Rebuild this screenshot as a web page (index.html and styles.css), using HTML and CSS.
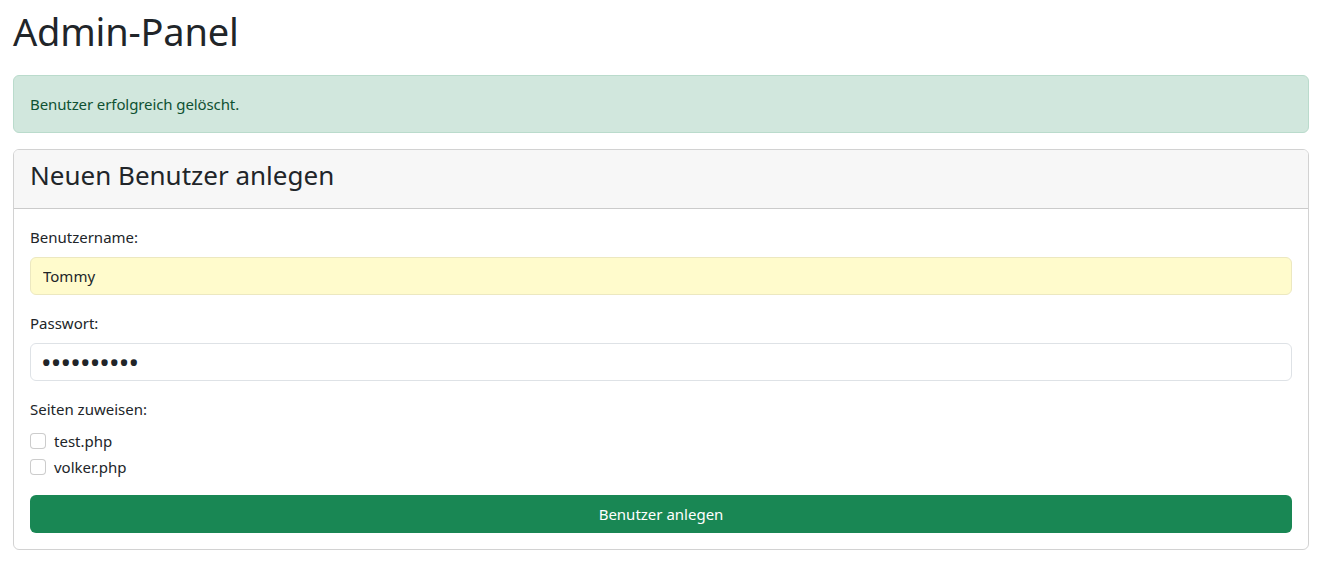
FILE: index.html
```html
<!DOCTYPE html>
<html lang="de">
<head>
<meta charset="utf-8">
<title>Admin-Panel</title>
<link rel="stylesheet" href="styles.css">
</head>
<body>
<div class="container">
  <h1 class="title">Admin-Panel</h1>
  <div class="alert">Benutzer erfolgreich gelöscht.</div>
  <div class="card">
    <div class="card-header"><h3 class="card-title">Neuen Benutzer anlegen</h3></div>
    <div class="card-body">
      <div class="field">
        <label class="label" for="u">Benutzername:</label>
        <input class="input autofill" id="u" type="text" value="Tommy">
      </div>
      <div class="field">
        <label class="label" for="p">Passwort:</label>
        <input class="input pw" id="p" type="password" value="geheim1234">
      </div>
      <div class="field">
        <div class="label">Seiten zuweisen:</div>
        <div class="check"><span class="box"></span><span>test.php</span></div>
        <div class="check"><span class="box"></span><span>volker.php</span></div>
      </div>
      <button class="btn" type="button">Benutzer anlegen</button>
    </div>
  </div>
</div>
</body>
</html>
```
FILE: styles.css
```css
* { box-sizing: border-box; }
html, body { margin: 0; padding: 0; background: #fff; }
body {
  font-family: "Noto Sans", "Open Sans", sans-serif;
  font-size: 15px;
  line-height: 24px;
  color: #212529;
}
.container { padding: 0 10px 0 13px; }
.title {
  font-size: 38px;
  font-weight: 400;
  line-height: 50px;
  margin: 6px 0 19px;
  letter-spacing: -0.2px;
}
.alert {
  background: #d1e7dd;
  border: 1px solid #badbcc;
  color: #0f5132;
  border-radius: 6px;
  padding: 16px 16px;
  margin-bottom: 16px;
  letter-spacing: -0.1px;
}
.card {
  border: 1px solid rgba(0,0,0,.175);
  border-radius: 6px;
  overflow: hidden;
}
.card-header {
  background: #f7f7f7;
  border-bottom: 1px solid rgba(0,0,0,.175);
  padding: 8px 16px;
}
.card-title {
  margin: 0 0 8px;
  font-size: 26px;
  font-weight: 400;
  line-height: 34px;
}
.card-body { padding: 16px 16px 16px; }
.field { margin-bottom: 16px; }
.label { display: block; margin-bottom: 8px; }
.input {
  display: block;
  width: 100%;
  height: 38px;
  padding: 6px 12px;
  font-family: inherit;
  font-size: 15px;
  color: #212529;
  background: #fff;
  border: 1px solid #dee2e6;
  border-radius: 6px;
  outline: none;
}
.input.autofill { background: #fffbcc; border-color: #ece8c0; }
.input.pw { letter-spacing: -0.8px; font-size: 28px; padding-left: 10px; }
.check {
  display: flex;
  align-items: center;
  gap: 8px;
  margin-bottom: 2px;
}
.box {
  width: 16px;
  height: 16px;
  border: 1px solid rgba(0,0,0,.2);
  border-radius: 4px;
  background: #fff;
}
.btn {
  display: block;
  width: 100%;
  height: 38px;
  border: 0;
  border-radius: 6px;
  background: #198754;
  color: #fff;
  font-family: inherit;
  font-size: 15px;
}
```
